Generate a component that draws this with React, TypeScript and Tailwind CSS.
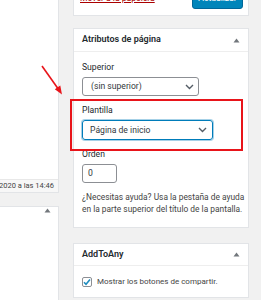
import React from 'react';

const font = { fontFamily: 'Roboto, "Noto Sans", sans-serif' };

const Chevron = () => (
    <svg width="9" height="6" viewBox="0 0 9 6" className="shrink-0">
        <path d="M1 1l3.5 3.5L8 1" fill="none" stroke="#555d66" strokeWidth="1.4" />
    </svg>
);

const Toggle = () => (
    <svg width="7" height="5" viewBox="0 0 7 5">
        <path d="M3.5 0.5L6.5 4.5H0.5Z" fill="#72777c" />
    </svg>
);

const App: React.FC = () => {
    return (
        <div className="relative w-[261px] h-[300px] overflow-hidden bg-[#f1f1f1] text-[#23282d] text-[8.6px]" style={font}>
            <div className="flex gap-[14px] h-full">
                {/* left column, the editor area */}
                <div className="w-[59px] shrink-0 flex flex-col">
                    <div className="h-[193px] bg-white border-r border-b border-[#e2e4e7] flex flex-col justify-end">
                        <div className="h-[13px] bg-[#f7f7f7] border-t border-[#e8e8e8] flex items-center justify-end pr-[4px] text-[7.5px] text-[#444] whitespace-nowrap">
                            2020 a las 14:46
                        </div>
                    </div>
                    <div className="mt-[13px] flex-1 bg-white border-r border-t border-[#e2e4e7] flex justify-end pr-[7px] pt-[1px]">
                        <Toggle />
                    </div>
                </div>

                {/* right column, the sidebar */}
                <div className="w-[176px] shrink-0 flex flex-col">
                    <div className="-mt-[10px] h-[26px] bg-white border border-[#e2e4e7] flex items-start justify-between pl-[6px] pr-[5px]">
                        <span className="text-[#a00] underline leading-[14px]">Mover a la papelera</span>
                        <div className="w-[51px] h-[18px] rounded-[3px] bg-[#0085ba] border border-[#006799] text-white flex items-center justify-center pb-[4px]">
                            Actualizar
                        </div>
                    </div>

                    <div className="mt-[12px] bg-white border border-[#e2e4e7]">
                        <div className="h-[23px] border-b border-[#eee] flex items-center justify-between pl-[8px] pr-[8px]">
                            <span className="font-semibold text-[9px]">Atributos de página</span>
                            <Toggle />
                        </div>
                        <div className="pl-[8px] pr-[6px] pt-[8px] pb-[12px]">
                            <div className="leading-[14px]">Superior</div>
                            <div className="mt-[3px] w-[117px] h-[19px] border border-[#8c8f94] rounded-[3px] flex items-center justify-between pl-[8px] pr-[4px] text-[#32373c]">
                                <span>(sin superior)</span>
                                <Chevron />
                            </div>
                            <div className="mt-[7px] leading-[14px]">Plantilla</div>
                            <div className="mt-[3px] w-[131px] h-[20px] border border-[#007cba] rounded-[3px] shadow-[0_0_0_1px_rgba(0,124,186,0.35)] flex items-center justify-between pl-[7px] pr-[5px] text-[#32373c]">
                                <span>Página de inicio</span>
                                <Chevron />
                            </div>
                            <div className="mt-[7px] leading-[14px]">Orden</div>
                            <div className="mt-[3px] w-[35px] h-[19px] border border-[#8c8f94] rounded-[3px] flex items-center pl-[5px] text-[#32373c]">
                                0
                            </div>
                            <p className="mt-[9px] leading-[11.5px] text-[8.4px] text-[#444] whitespace-nowrap">
                                ¿Necesitas ayuda? Usa la pestaña de ayuda<br />
                                en la parte superior del título de la pantalla.
                            </p>
                        </div>
                    </div>

                    <div className="mt-[15px] bg-white border border-[#e2e4e7]">
                        <div className="h-[22px] border-b border-[#eee] flex items-center justify-between pl-[8px] pr-[8px]">
                            <span className="font-semibold text-[9px]">AddToAny</span>
                            <Toggle />
                        </div>
                        <div className="h-[31px] pl-[8px] flex items-center gap-[5px] text-[#444] whitespace-nowrap">
                            <span className="w-[10px] h-[10px] shrink-0 border border-[#8c8f94] rounded-[2px] bg-white flex items-center justify-center">
                                <svg width="8" height="8" viewBox="0 0 8 8">
                                    <path d="M1 4.2l2 2L7 1.5" fill="none" stroke="#1e8cbe" strokeWidth="1.6" />
                                </svg>
                            </span>
                            <span className="text-[8px]">Mostrar los botones de compartir.</span>
                        </div>
                    </div>
                </div>
            </div>

            {/* annotation: red box and arrow */}
            <div className="absolute left-[70px] top-[99px] w-[173px] h-[52px] border-2 border-[#e8141a]" />
            <svg className="absolute left-0 top-0" width="80" height="110" viewBox="0 0 80 110">
                <line x1="42" y1="66" x2="59" y2="90" stroke="#e8141a" strokeWidth="1.6" />
                <path d="M62 94.5L54.8 89.3L60.3 85.4Z" fill="#e8141a" />
            </svg>
        </div>
    );
};

export default App;
